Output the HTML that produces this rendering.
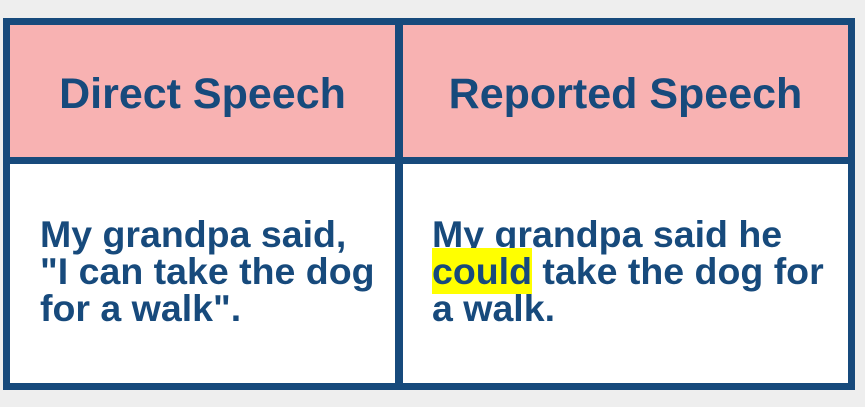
<!DOCTYPE html>
<html><head><style>
html,body{margin:0;padding:0;width:865px;height:407px;background:#eeeeee;overflow:hidden}
.t{position:absolute;left:3px;top:18px;width:852px;height:372px;box-sizing:border-box;border:7px solid #174a7c;background:#fff}
.h{position:absolute;left:0;top:0;width:838px;height:132px;background:#f8b2b2}
.hl{position:absolute;top:132px;left:0;width:838px;height:7px;background:#174a7c}
.vl{position:absolute;left:385px;top:0;width:8px;height:358px;background:#174a7c}
.ht{position:absolute;top:0;height:132px;text-align:center;font:bold 43px "Liberation Sans",sans-serif;line-height:138px;color:#174a7c}
.b{position:absolute;top:191px;font:bold 37.5px "Liberation Sans",sans-serif;line-height:37px;color:#174a7c;white-space:nowrap}
.y{background:#ffff00;padding:2px 0}
</style></head><body>
<div class="t">
<div class="h"></div><div class="hl"></div><div class="vl"></div>
<div class="ht" style="left:0;width:385px">Direct Speech</div>
<div class="ht" style="left:393px;width:445px">Reported Speech</div>
<div class="b" style="left:30px">My grandpa said,<br>"I can take the dog<br>for a walk".</div>
<div class="b" style="left:422px">My grandpa said he<br><span class="y">could</span> take the dog for<br>a walk.</div>
</div>
</body></html>
